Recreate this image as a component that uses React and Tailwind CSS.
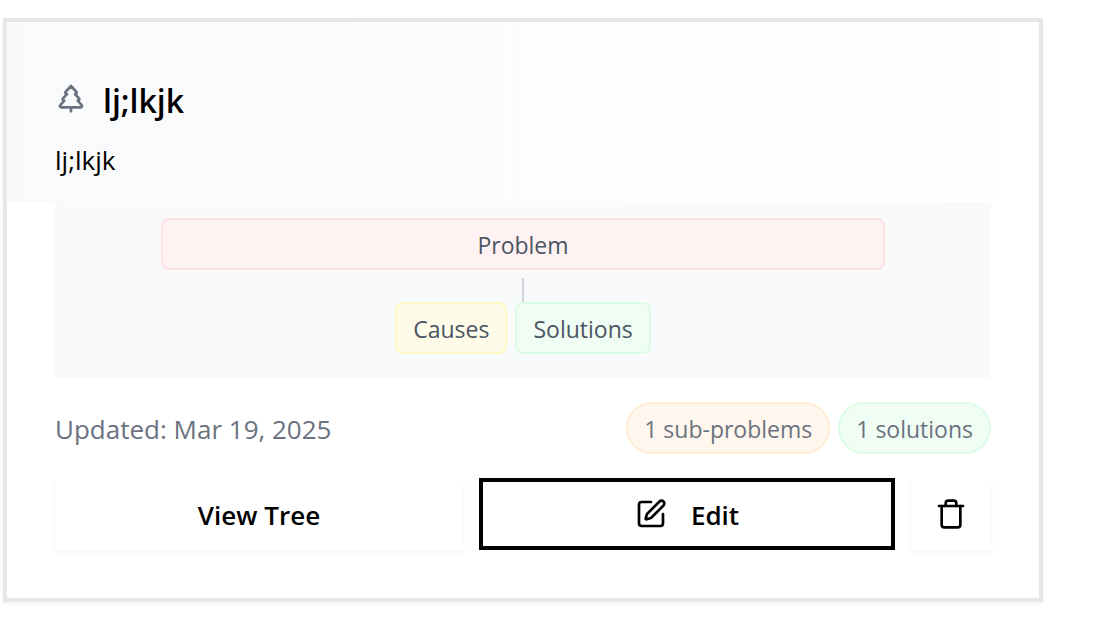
import { SquarePen, Trash, TreePine } from "lucide-react";

function Node({ className, children }) {
  return (
    <div className={`rounded-lg border-2 px-4 pt-[9px] pb-[7px] text-center text-[23px] leading-8 text-[#4b5563] ${className}`}>
      {children}
    </div>
  );
}

function Pill({ className, children }) {
  return (
    <span className={`rounded-full border-2 px-4 pt-[9px] pb-[7px] text-[23px] leading-8 ${className}`}>
      {children}
    </span>
  );
}

export default function App() {
  return (
    <main className="bg-white pt-[18px] pr-[71px] pb-9 pl-[3px] font-['Open_Sans','Noto_Sans',sans-serif] text-black">
      <article className="border-4 border-[#e5e7eb] bg-white shadow-[0_2px_4px_rgba(0,0,0,0.05)]">
        <header className="flex flex-col gap-3 bg-linear-to-r from-[#f9fafb] to-white px-12 pt-14 pb-[18px]">
          <div className="flex items-start gap-4">
            <TreePine size={32} className="mt-1 text-[#6b7280]" />
            <h2 className="text-[32px] leading-[46px] font-semibold">lj;lkjk</h2>
          </div>
          <p className="text-[26px] leading-12">lj;lkjk</p>
        </header>

        <div className="px-12 pb-12">
          <section className="flex flex-col items-center bg-[#f9fafb] px-4 pt-4 pb-6">
            <Node className="w-4/5 border-[#fee2e2] bg-[#fef2f2]">Problem</Node>
            <div className="mt-2 h-6 w-[2px] bg-[#d1d5db]" />
            <div className="flex gap-2">
              <Node className="border-[#fef9c3] bg-[#fefce8]">Causes</Node>
              <Node className="border-[#dcfce7] bg-[#f0fdf4]">Solutions</Node>
            </div>
          </section>

          <div className="mt-6 flex items-center justify-between text-[#6b7280]">
            <span className="pt-[2px] text-[26px] leading-10">Updated: Mar 19, 2025</span>
            <div className="flex gap-2">
              <Pill className="border-[#ffedd5] bg-[#fff7ed]">1 sub-problems</Pill>
              <Pill className="border-[#dcfce7] bg-[#f0fdf4]">1 solutions</Pill>
            </div>
          </div>

          <div className="mt-6 flex gap-4 text-[26px] leading-10 font-semibold">
            <button type="button" className="h-[72px] flex-1 bg-white pt-[2px] shadow-[0_2px_4px_rgba(0,0,0,0.05)]">
              View Tree
            </button>
            <button
              type="button"
              className="flex h-[72px] flex-1 items-center justify-center gap-6 border-4 border-black bg-white"
            >
              <SquarePen size={32} />
              <span className="pt-[2px]">Edit</span>
            </button>
            <button
              type="button"
              aria-label="Delete"
              className="flex h-[72px] w-20 items-center justify-center bg-white shadow-[0_2px_4px_rgba(0,0,0,0.05)]"
            >
              <Trash size={32} />
            </button>
          </div>
        </div>
      </article>
    </main>
  );
}
